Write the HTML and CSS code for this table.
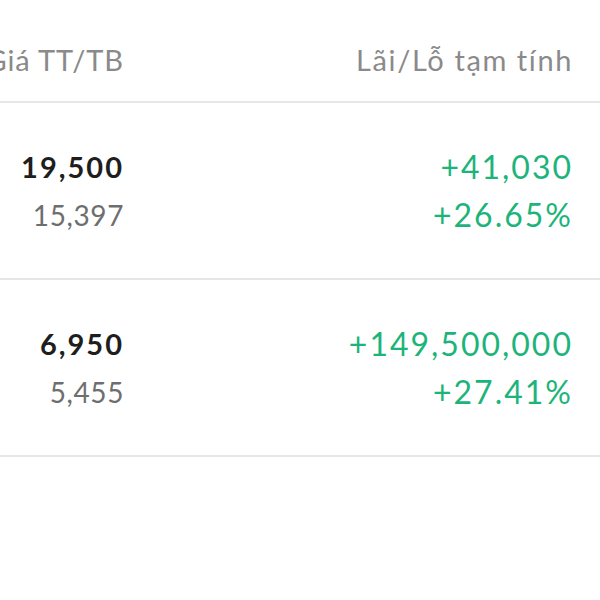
FILE: index.html
```html
<!DOCTYPE html>
<html lang="vi">
<head>
<meta charset="utf-8">
<link rel="stylesheet" href="styles.css">
</head>
<body>
<div class="table">
  <div class="row head">
    <div class="col left"><span class="h-left">Giá TT/TB</span></div>
    <div class="col right"><span>Lãi/Lỗ tạm tính</span></div>
  </div>
  <div class="row item">
    <div class="col left">
      <span class="price">19,500</span>
      <span class="avg">15,397</span>
    </div>
    <div class="col right">
      <span class="gain">+41,030</span>
      <span class="gain">+26.65%</span>
    </div>
  </div>
  <div class="row item">
    <div class="col left">
      <span class="price">6,950</span>
      <span class="avg">5,455</span>
    </div>
    <div class="col right">
      <span class="gain">+149,500,000</span>
      <span class="gain">+27.41%</span>
    </div>
  </div>
</div>
</body>
</html>
```
FILE: styles.css
```css
html, body {
  margin: 0;
  padding: 0;
  background: #ffffff;
  overflow: hidden;
}
body {
  width: 600px;
  height: 600px;
  font-family: Lato, "Noto Sans", sans-serif;
}
.table {
  display: flex;
  flex-direction: column;
}
.row {
  display: grid;
  grid-template-columns: 123px 1fr;
  padding-right: 28px;
  border-bottom: 2px solid #e6e6e6;
}
.col {
  display: flex;
  flex-direction: column;
  align-items: flex-end;
  white-space: nowrap;
}
.col span {
  margin-right: -1px;
}
.head {
  height: 101px;
}
.head .col {
  padding-top: 42px;
  font-size: 29px;
  color: #8a8a8a;
  letter-spacing: 1.6px;
}
.head .h-left {
  letter-spacing: 0.9px;
}
.item {
  height: 175px;
}
.item .col {
  padding-top: 48px;
  gap: 16px;
}
.price {
  font-size: 29px;
  line-height: 32px;
  font-weight: 700;
  color: #1e1e1e;
  letter-spacing: 2px;
}
.avg {
  font-size: 28px;
  line-height: 32px;
  color: #6e6e6e;
  letter-spacing: 0.6px;
}
.gain {
  font-size: 32px;
  line-height: 32px;
  color: #1db47b;
  letter-spacing: 2px;
}
```
